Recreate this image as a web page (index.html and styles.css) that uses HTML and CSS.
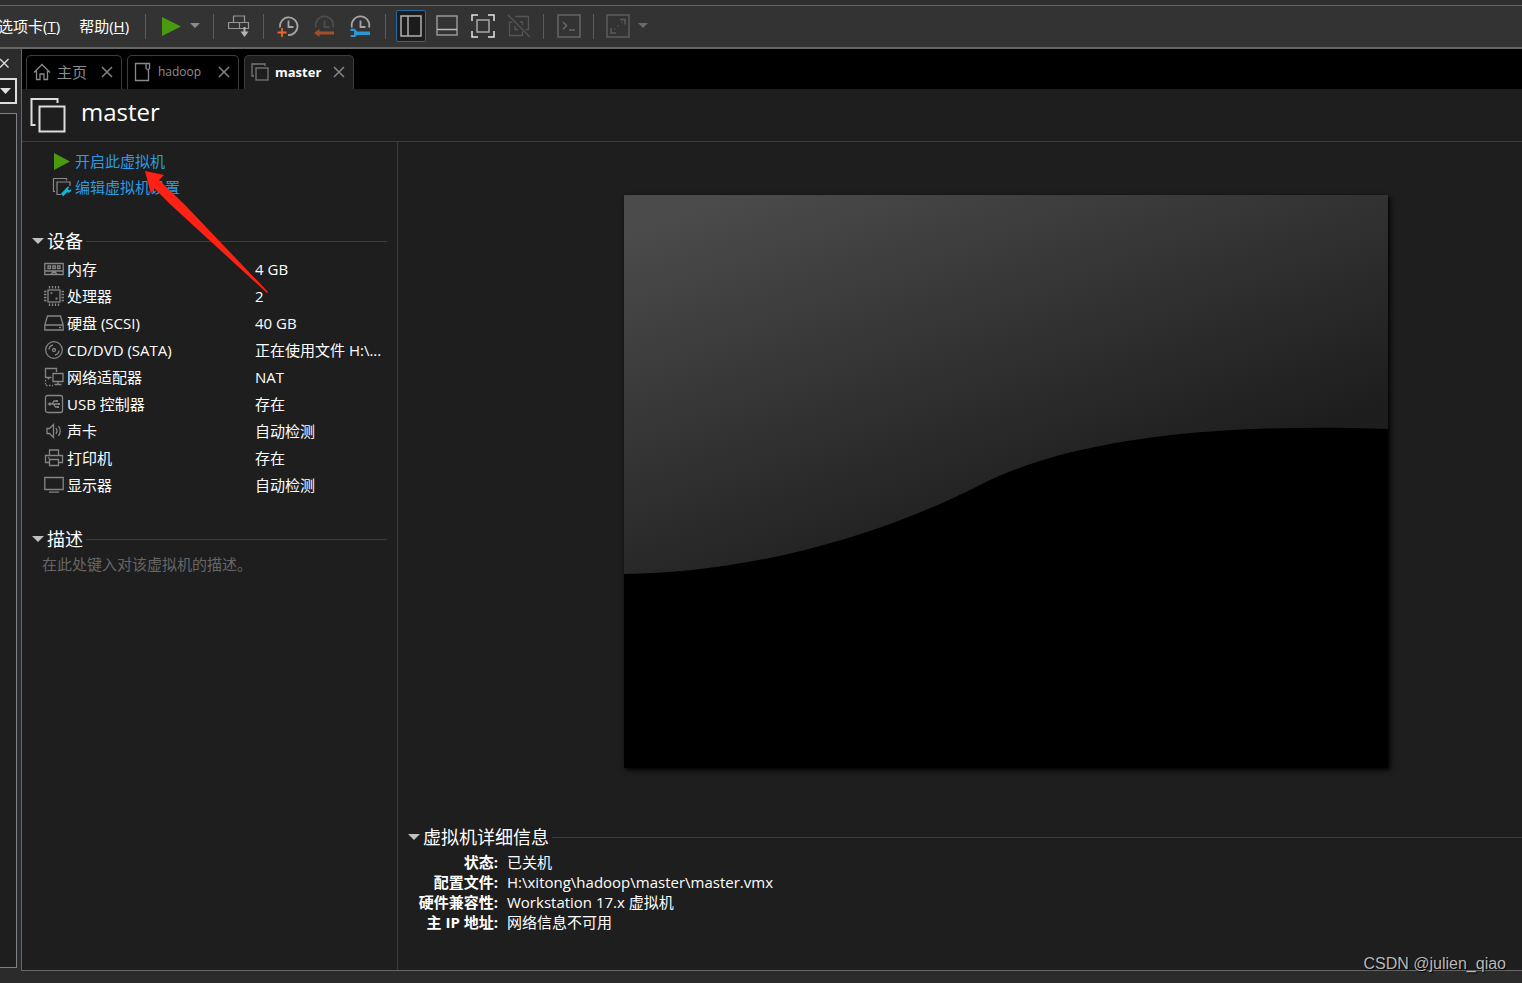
FILE: index.html
```html
<!DOCTYPE html>
<html lang="zh-CN">
<head>
<meta charset="utf-8">
<meta name="viewport" content="width=device-width, initial-scale=1">
<title>master - VMware Workstation</title>
<link rel="stylesheet" href="styles.css">
</head>
<body class="app">
<header class="toolbar">
  <nav class="menu">
    <button class="menu-item menu-cut" type="button">选项卡(<u>T</u>)</button>
    <button class="menu-item" type="button">帮助(<u>H</u>)</button>
  </nav>
  <span class="sep"></span>
  <div class="group group-power">
    <button class="tool" type="button" aria-label="开启"><svg width="20" height="22"><path d="M1 2 20 11.500 1 21Z" fill="#4a9a10"/></svg></button>
    <button class="tool" type="button" aria-label="电源选项"><svg width="10" height="6"><path d="M0 0H10L5 5Z" fill="#8c8c8c"/></svg></button>
  </div>
  <span class="sep"></span>
  <div class="group group-one">
    <button class="tool" type="button" aria-label="发送 Ctrl+Alt+Del"><svg width="22" height="24" fill="none" stroke="#969696" stroke-width="1.200"><path d="M5.500 8.500v-6.500h11v6.500M.6 8.500H20.500V14.500H.6ZM11.500 8.500v6"/><path d="M16.500 13v8" stroke="#b4b4b4" stroke-width="2"/><path d="M12.500 17.500h8L16.500 23Z" fill="#b4b4b4" stroke="none"/></svg></button>
  </div>
  <span class="sep"></span>
  <div class="group group-snap">
    <button class="tool" type="button" aria-label="拍摄快照"><svg width="22" height="22" fill="none" stroke="#a5a5a5" stroke-width="1.800"><path d="M3 12.500A8.800 8.800 0 1 1 11 20M11.500 5.500v6.500h5"/><path d="M5 13v9M.5 17.500h9" stroke="#e8662c"/></svg></button>
    <button class="tool" type="button" aria-label="恢复快照"><svg width="22" height="22" fill="none" stroke="#4d4d4d" stroke-width="1.800"><path d="M3 12.500A8.800 8.800 0 1 1 20 12.500M11.500 5.500v6.500h5"/><path d="M6.500 14v2.500H21v3H6.500v2.500L1 18Z" fill="#a2502a" stroke="none"/></svg></button>
    <button class="tool" type="button" aria-label="管理快照"><svg width="22" height="22" fill="none" stroke="#a5a5a5" stroke-width="1.800"><path d="M3 12.500A8.800 8.800 0 1 1 20 12.500M11.500 5.500v6.500h5"/><path d="M1.500 14c3-1.500 6 .3 6.500 2.500H21v3.500H8c-1 2-4 3-6.500 1.500v-1.500H5v-4H1.500Z" fill="#2a96d6" stroke="none"/></svg></button>
  </div>
  <span class="sep"></span>
  <div class="group group-view">
    <button class="tool tool-on" type="button" aria-label="显示库" aria-pressed="true"><svg width="22" height="22" fill="none" stroke="#b0b0b0" stroke-width="1.500"><rect x="1" y="1" width="20" height="20"/><path d="M8 1v20"/></svg></button>
    <button class="tool" type="button" aria-label="缩略图栏"><svg width="22" height="22" fill="none" stroke="#969696" stroke-width="1.500"><rect x="1" y="1" width="20" height="19"/><path d="M1 14.500h20" stroke="#bbb"/></svg></button>
    <button class="tool" type="button" aria-label="全屏"><svg width="24" height="24" fill="none" stroke="#e4e4e4" stroke-width="1.500"><path d="M1 7V1h6M17 1h6v6M23 17v6h-6M7 23H1v-6"/><rect x="6" y="6" width="12" height="12" stroke="#a8a8a8"/></svg></button>
    <button class="tool" type="button" aria-label="Unity" disabled><svg width="24" height="24" fill="none" stroke="#555" stroke-width="1.300"><path d="M1 1 23 23M8 2.500h13.500v13h-3M2.500 8v13.500h13v-4M2.500 8h3M13 8h2.500v3M8 12v3.500h3"/></svg></button>
  </div>
  <span class="sep"></span>
  <div class="group group-one">
    <button class="tool" type="button" aria-label="控制台" disabled><svg width="24" height="24" fill="none" stroke="#666" stroke-width="1.500"><rect x="1" y="1" width="22" height="22"/><path d="M6 8l3.500 3.500L6 15.500M12 16h6"/></svg></button>
  </div>
  <span class="sep"></span>
  <div class="group group-fit">
    <button class="tool" type="button" aria-label="自由拉伸" disabled><svg width="24" height="24" fill="none" stroke="#5c5c5c" stroke-width="1.500"><rect x="1" y="1" width="22" height="22"/><path d="M14 5.500h5v5M5 14v5h5"/><path d="M8 16 18 6" stroke-width="1" stroke-dasharray="2 3"/></svg></button>
    <button class="tool" type="button" aria-label="拉伸选项" disabled><svg width="10" height="6"><path d="M0 0H10L5 5Z" fill="#6a6a6a"/></svg></button>
  </div>
</header>

<div class="body">
  <aside class="library">
    <button class="lib-close" type="button" aria-label="关闭库"><svg width="9" height="10" stroke="#ddd" stroke-width="1.300"><path d="M0 1 8.500 9.500M8.500 1 0 9.500"/></svg></button>
    <button class="lib-drop" type="button" aria-label="筛选"><svg width="11" height="6"><path d="M0 0H11L5.500 6Z" fill="#e0e0e0"/></svg></button>
    <div class="lib-tree"></div>
  </aside>

  <main class="workspace">
    <nav class="tabs">
      <div class="tab tab-home">
        <svg width="18" height="18" fill="none" stroke="#8a8a8a" stroke-width="1.300"><path d="M1 9.500 9 1.500 17 9.500M3.500 8V16.500H7V11h4v5.500h3.500V8"/></svg>
        <span class="tab-name">主页</span>
        <button class="tab-close" type="button" aria-label="关闭主页"><svg width="12" height="12" stroke="#858585" stroke-width="1.500"><path d="M1 1 11 11M11 1 1 11"/></svg></button>
      </div>
      <div class="tab tab-hadoop">
        <svg width="18" height="20" fill="none" stroke="#8a8a8a" stroke-width="1.300"><path d="M12 1.500H1.500V18.500H14.500V8M12 1.500h3.500v5l-1.500 1.500-2-1.500Z"/></svg>
        <span class="tab-name">hadoop</span>
        <button class="tab-close" type="button" aria-label="关闭 hadoop"><svg width="12" height="12" stroke="#858585" stroke-width="1.500"><path d="M1 1 11 11M11 1 1 11"/></svg></button>
      </div>
      <div class="tab tab-master tab-active">
        <svg width="18" height="18" fill="none" stroke="#777" stroke-width="1.300"><path d="M3 13H1V1h13v2"/><rect x="5" y="5" width="12" height="12"/></svg>
        <span class="tab-name">master</span>
        <button class="tab-close" type="button" aria-label="关闭 master"><svg width="12" height="12" stroke="#858585" stroke-width="1.500"><path d="M1 1 11 11M11 1 1 11"/></svg></button>
      </div>
    </nav>

    <div class="vm-head">
      <svg width="36" height="36" fill="none" stroke="#ddd" stroke-width="2"><path d="M5.500 28H1.500V2H27.500V6"/><rect x="9.500" y="9.500" width="25" height="25"/></svg>
      <h1 class="vm-name">master</h1>
    </div>

    <div class="columns">
      <section class="summary">
        <div class="actions">
          <a class="action" href="#start"><svg width="20" height="20"><path d="M2 2 18 10.500 2 19Z" fill="#4a9a10"/></svg>开启此虚拟机</a>
          <a class="action" href="#edit"><svg width="20" height="20" fill="none" stroke="#8a8a8a" stroke-width="1.200"><path d="M3 14.500H1.500V1.500H14.500V3.500M18 9V5H5V17.500H9"/><path d="M10 18 15 13" stroke="#18b4d4" stroke-width="3.200"/><path d="M14 14.500c-1.500-2.500 1-5.500 3.500-4.500L15.800 12l1.500 1.500 2-1.500c.5 3-2.500 5-5.300 2.500Z" fill="#18b4d4" stroke="none"/></svg>编辑虚拟机设置</a>
        </div>

        <h2 class="heading"><button class="fold" type="button" aria-expanded="true"><svg width="12" height="6"><path d="M0 0H12L6 6Z" fill="#bfbfbf"/></svg>设备</button></h2>
        <table class="devices">
          <tr><th scope="row"><span class="device"><svg class="icon" width="20" height="20"><path d="M.8 4.500H19.200V15.500H.8ZM1 12h18M7 15.500l1.500-2h3l1.500 2"/><path d="M4 7h2.500v2.500H4ZM8.800 7h2.500v2.500H8.800ZM13.500 7H16v2.500h-2.500Z"/></svg>内存</span></th><td>4 GB</td></tr>
          <tr><th scope="row"><span class="device"><svg class="icon" width="20" height="20"><rect x="4" y="4" width="12" height="12"/><path d="M5.500 0v2.500M8.500 0v2.500M11.500 0v2.500M14.500 0v2.500M5.500 17.500V20M8.500 17.500V20M11.500 17.500V20M14.500 17.500V20M0 5.500h2.500M0 8.500h2.500M0 11.500h2.500M0 14.500h2.500M17.500 5.500H20M17.500 8.500H20M17.500 11.500H20M17.500 14.500H20M6.500 7h2M11.500 12.500h2M12.500 11.500v2"/></svg>处理器</span></th><td>2</td></tr>
          <tr><th scope="row"><span class="device"><svg class="icon" width="20" height="20"><path d="M3.500 3H16.500L19.200 12V17H.8V12ZM.8 12H19.200M15 14.500h2"/></svg>硬盘 (SCSI)</span></th><td>40 GB</td></tr>
          <tr><th scope="row"><span class="device"><svg class="icon" width="20" height="20"><circle cx="10" cy="10" r="8.300"/><circle cx="10" cy="10" r="1.500"/><path d="M5 9.500A5 5 0 0 1 9 5M11 15A5 5 0 0 0 15 10.500"/></svg>CD/DVD (SATA)</span></th><td>正在使用文件 H:\...</td></tr>
          <tr><th scope="row"><span class="device"><svg class="icon" width="20" height="20"><path d="M7.500 10.500H1.500V1.500H12.500V5M9 6.500h10v8H9ZM14 14.500v3M10.500 17.500h7M4.500 10.500v2"/><path d="M1.500 13v5.500H9" stroke-dasharray="1.500 1.500"/></svg>网络适配器</span></th><td>NAT</td></tr>
          <tr><th scope="row"><span class="device"><svg class="icon" width="20" height="20"><rect x="1.500" y="1.500" width="17" height="17" rx="2"/><path d="M5 10H15M8 10l2-3h2M9.500 10l2 3h1.500"/><path d="M6.500 7.800 3.500 10l3 2.200ZM12 6h2v2h-2ZM13 12h2v2h-2ZM14 9h2v2h-2Z" fill="#858585" stroke="none"/></svg>USB 控制器</span></th><td>存在</td></tr>
          <tr><th scope="row"><span class="device"><svg class="icon" width="20" height="20"><path d="M3 7.500H5.500L9.500 3.500V16.500L5.500 12.500H3ZM12 7q2 3 0 6M14.500 5q3.500 5 0 10"/></svg>声卡</span></th><td>自动检测</td></tr>
          <tr><th scope="row"><span class="device"><svg class="icon" width="20" height="20"><path d="M5.500 7V2H14.500V7M5 14.500H1.500V7.500H18.500V14.500H15M5.500 11.500h9v6h-9ZM4 9.800h1.500"/></svg>打印机</span></th><td>存在</td></tr>
          <tr><th scope="row"><span class="device"><svg class="icon" width="20" height="20"><path d="M.8 2.500H19.200V14.500H.8ZM5 17.200H15"/></svg>显示器</span></th><td>自动检测</td></tr>
        </table>

        <h2 class="heading"><button class="fold" type="button" aria-expanded="true"><svg width="12" height="6"><path d="M0 0H12L6 6Z" fill="#bfbfbf"/></svg>描述</button></h2>
        <input class="note" type="text" aria-label="描述" placeholder="在此处键入对该虚拟机的描述。">
      </section>

      <section class="console">
        <div class="stage">
          <svg class="screen" viewBox="0 0 764 573" role="img" aria-label="虚拟机屏幕">
            <defs><linearGradient id="sheen" gradientUnits="userSpaceOnUse" x1="100" y1="0" x2="248" y2="400"><stop offset="0" stop-color="#4b4b4b"/><stop offset="1" stop-color="#1d1d1d"/></linearGradient></defs>
            <rect width="764" height="573" fill="#000"/>
            <path d="M0 0H764V234C600 228 450 242 356 290C240 349 110 378 0 379Z" fill="url(#sheen)"/>
          </svg>
        </div>
        <h2 class="heading heading-wide"><button class="fold" type="button" aria-expanded="true"><svg width="12" height="6"><path d="M0 0H12L6 6Z" fill="#bfbfbf"/></svg>虚拟机详细信息</button></h2>
        <dl class="details">
          <dt>状态:</dt><dd>已关机</dd>
          <dt>配置文件:</dt><dd>H:\xitong\hadoop\master\master.vmx</dd>
          <dt>硬件兼容性:</dt><dd>Workstation 17.x 虚拟机</dd>
          <dt>主 IP 地址:</dt><dd>网络信息不可用</dd>
        </dl>
      </section>
    </div>
  </main>
</div>

<svg class="pointer" width="124" height="122" aria-hidden="true"><path d="M0 0 19 4 14 9 40 34 123 121 122 122 26 34 9 17 6 23Z" fill="#ff2114"/></svg>
<p class="watermark">CSDN @julien_qiao</p>
</body>
</html>
```

FILE: styles.css
```css
* { box-sizing: border-box; }
.app {
  margin: 0;
  min-height: 100vh;
  display: flex;
  flex-direction: column;
  position: relative;
  overflow-x: hidden;
  padding-bottom: 12px;
  background: #2b2b2b;
  color: #fff;
  font: 15px/20px "Open Sans", "Noto Sans CJK SC", sans-serif;
}
svg { display: block; flex: none; }
button { padding: 0; border: 0; background: none; color: inherit; font: inherit; }

.toolbar {
  display: flex;
  align-items: center;
  height: 49px;
  border-top: 5px solid #2e2e2e;
  border-bottom: 2px solid #666;
  background: #333;
  box-shadow: inset 0 1px #666;
}
.menu { display: flex; gap: 19px; width: 145px; }
.menu-item { flex: none; white-space: nowrap; }
.menu-cut { margin-left: -2px; }
.sep { flex: none; width: 1px; height: 25px; background: #5c5c5c; }
.group { display: flex; align-items: center; flex: none; }
.group-power { width: 67px; padding-left: 15px; gap: 9px; }
.group-one { width: 49px; justify-content: center; }
.group-snap { width: 121px; padding-left: 13px; gap: 14px; }
.group-view { width: 157px; padding-left: 10px; gap: 6px; }
.group-view .tool { display: grid; place-items: center; width: 30px; height: 32px; }
.group-view .tool-on { background: #1c1c1c; border: 1px solid #2468a0; border-radius: 2px; }
.group-fit { padding-left: 12px; gap: 8px; }

.body { flex: 1; display: flex; }
.library { width: 21px; flex: none; display: flex; flex-direction: column; padding: 8px 4px 3px 0; }
.lib-close { height: 12px; }
.lib-drop {
  display: flex;
  align-items: center;
  height: 26px;
  margin: 9px 0;
  border: 2px solid #ddd;
  border-left: 0;
  background: #1e1e1e;
}
.lib-tree { flex: 1; border: 1px solid #7c8087; border-left: 0; background: #1e1e1e; }

.workspace {
  flex: 1;
  min-width: 0;
  display: flex;
  flex-direction: column;
  background: #1e1e1e;
  border-left: 1px solid #666;
  border-bottom: 1px solid #666;
}
.tabs { display: flex; gap: 5px; height: 40px; padding: 6px 4px 0; background: #000; }
.tab {
  display: flex;
  align-items: center;
  padding: 0 8px 2px 6px;
  border: 1px solid #3c3c3c;
  border-bottom: 0;
  border-radius: 5px 5px 0 0;
  color: #8f8f8f;
  font-size: 12px;
}
.tab-home { width: 96px; }
.tab-home .tab-name { font-size: 15px; }
.tab-hadoop { width: 112px; }
.tab-master { width: 110px; }
.tab-name { margin-left: 6px; }
.tab-close { margin-left: auto; }
.tab-active { background: #1e1e1e; color: #fff; font-size: 13px; font-weight: 700; }

.vm-head {
  display: flex;
  align-items: center;
  gap: 15px;
  height: 53px;
  padding-left: 8px;
  border-bottom: 1px solid #3c3c3c;
}
.vm-name { margin: 0 0 6px; font-size: 24px; line-height: 32px; font-weight: 400; }

.columns { flex: 1; display: flex; }
.summary { width: 376px; flex: none; padding: 6px 10px 0; border-right: 1px solid #3c3c3c; }
.actions { display: grid; padding-left: 20px; margin-bottom: 27px; }
.action { display: flex; align-items: center; gap: 3px; height: 26px; color: #2d9be0; text-decoration: none; }
.heading {
  display: flex;
  align-items: center;
  gap: 3px;
  margin: 0;
  font-size: 18px;
  line-height: 28px;
  font-weight: 400;
}
.heading::after { content: ""; flex: 1; height: 1px; background: #3c3c3c; }
.fold { display: flex; align-items: center; gap: 3px; line-height: 28px; }
.devices { width: 100%; margin-bottom: 27px; border-collapse: collapse; table-layout: fixed; }
.devices th { width: 223px; height: 27px; padding: 0 0 0 12px; font-weight: 400; text-align: left; }
.devices td { padding: 0; white-space: nowrap; }
.device { display: flex; align-items: center; gap: 3px; }
.icon { fill: none; stroke: #858585; stroke-width: 1.3; }
.note { width: 100%; height: 22px; padding: 0 10px; border: 0; background: none; color: #fff; font: inherit; }
.note::placeholder { color: #666; opacity: 1; }

.console { flex: 1; min-width: 0; }
.stage { padding: 53px 134px 55px 226px; }
.screen { width: 100%; height: auto; box-shadow: 2px 2px 5px #000; }
.heading-wide { padding-left: 10px; }
.details { display: grid; grid-template-columns: 100px 1fr; column-gap: 9px; margin: 1px 0 0; line-height: 20px; }
.details dt { font-weight: 700; text-align: right; }
.details dd { margin: 0; }

.pointer { position: absolute; left: 145px; top: 171px; pointer-events: none; }
.watermark {
  position: absolute;
  right: 16px;
  bottom: 9px;
  margin: 0;
  color: #b8b8b8;
  font: 16px/20px "Liberation Sans", Arial, sans-serif;
  text-shadow: 1px 1px 1px #000;
}
```
